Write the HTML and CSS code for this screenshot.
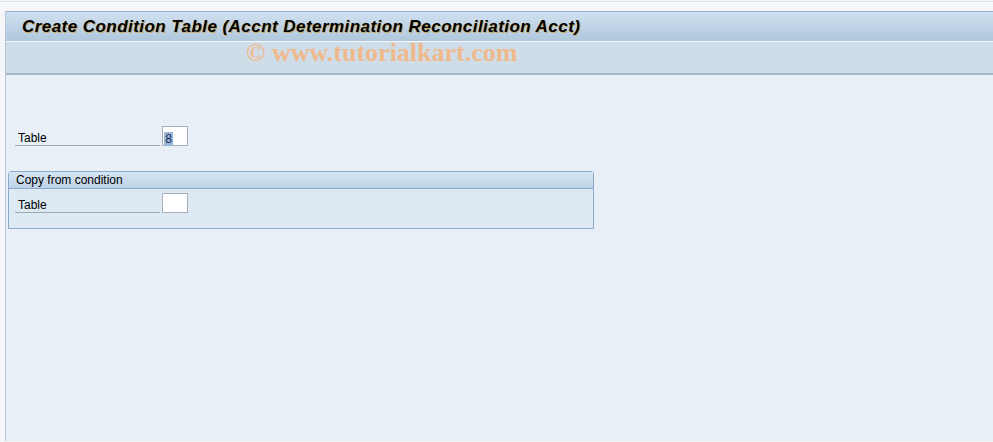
FILE: index.html
```html
<!DOCTYPE html>
<html>

<head>
  <meta charset="UTF-8">
  <meta name="viewport" content="width=device-width, initial-scale=1.0">
  <link rel="stylesheet" href="styles.css">
</head>

<body>
  <div class="screen">
    <div class="topline"></div>
    <div class="frame">
      <div class="title-bar">
        <h1 class="title">Create Condition Table (Accnt Determination Reconciliation Acct)</h1>
      </div>
      <div class="toolbar">
        <span class="watermark">&copy; www.tutorialkart.com</span>
      </div>

      <div class="content">
        <div class="field-row first-row">
          <label class="field-label" for="tabla">Table</label>
          <div class="field-input"><span class="selected">8</span></div>
        </div>

        <div class="group">
          <div class="group-head">Copy from condition</div>
          <div class="group-body">
            <div class="field-row">
              <label class="field-label" for="copia">Table</label>
              <div class="field-input"></div>
            </div>
          </div>
        </div>
      </div>
    </div>
  </div>
</body>

</html>
```

FILE: styles.css
```css
/* Base de la pantalla */
html,
body {
  margin: 0;
  padding: 0;
}

body {
  width: 993px;
  height: 442px;
  overflow: hidden;
  background-color: #f4f6fa;
  font-family: "Liberation Sans", Arial, sans-serif;
}

.screen {
  display: flex;
  flex-direction: column;
  height: 442px;
}

.topline {
  height: 10px;
  box-sizing: border-box;
  border-top: 1px solid #dfe2e6;
  margin-top: 1px;
  background-color: #f6f8fb;
}

.frame {
  flex: 1;
  margin-left: 5px;
  margin-bottom: 1px;
  display: flex;
  flex-direction: column;
  background-color: #e9eff6;
  border-left: 1px solid #b7c6d6;
}

/* Barra de titulo */
.title-bar {
  height: 31px;
  box-sizing: border-box;
  border-top: 1px solid #98aec4;
  border-bottom: 1px solid #f4f8fb;
  background: linear-gradient(#d0e1f0, #afc7dc);
  display: flex;
  align-items: center;
  padding: 1px 0 0 16px;
}

.title {
  margin: 0;
  font-size: 17px;
  font-weight: bold;
  font-style: italic;
  color: #000;
  letter-spacing: 0.45px;
  text-shadow: 1px 1px 0 #c9a860;
}

.toolbar {
  height: 33px;
  box-sizing: border-box;
  background-color: #cfdde8;
  border-bottom: 2px solid #a5b6c6;
  padding-left: 240px;
}

.watermark {
  font-family: "Liberation Serif", "Times New Roman", serif;
  font-weight: bold;
  font-size: 26px;
  color: #efb98c;
  line-height: 22px;
  position: relative;
  top: 0;
}

/* Contenido */
.content {
  padding: 51px 0 0 2px;
}

.field-row {
  display: flex;
  align-items: center;
  height: 20px;
}

.first-row {
  margin-left: 7px;
}

.field-label {
  width: 145px;
  height: 20px;
  box-sizing: border-box;
  padding: 5px 0 0 3px;
  font-size: 12px;
  color: #000;
  border-bottom: 1px solid #a1a8b0;
}

.field-input {
  width: 26px;
  height: 20px;
  box-sizing: border-box;
  margin-left: 2px;
  background-color: #fff;
  border: 1px solid #a6afb9;
  padding: 2px 0 0 1px;
}

.selected {
  display: inline-block;
  width: 9px;
  height: 14px;
  background-color: #9ab6d6;
  font-size: 12px;
  line-height: 14px;
  color: #1a2a5a;
  text-align: center;
}

/* Grupo de campos */
.group {
  width: 584px;
  margin-top: 25px;
  border: 1px solid #8eaacb;
  border-radius: 3px 3px 0 0;
  background-color: #dde9f3;
}

.group-head {
  height: 17px;
  box-sizing: border-box;
  border-bottom: 1px solid #8aa7c8;
  background: linear-gradient(#d6e5f3, #bed3e8);
  font-size: 12px;
  line-height: 16px;
  padding-left: 7px;
  color: #000;
}

.group-body {
  padding: 4px 0 15px 6px;
}
```
